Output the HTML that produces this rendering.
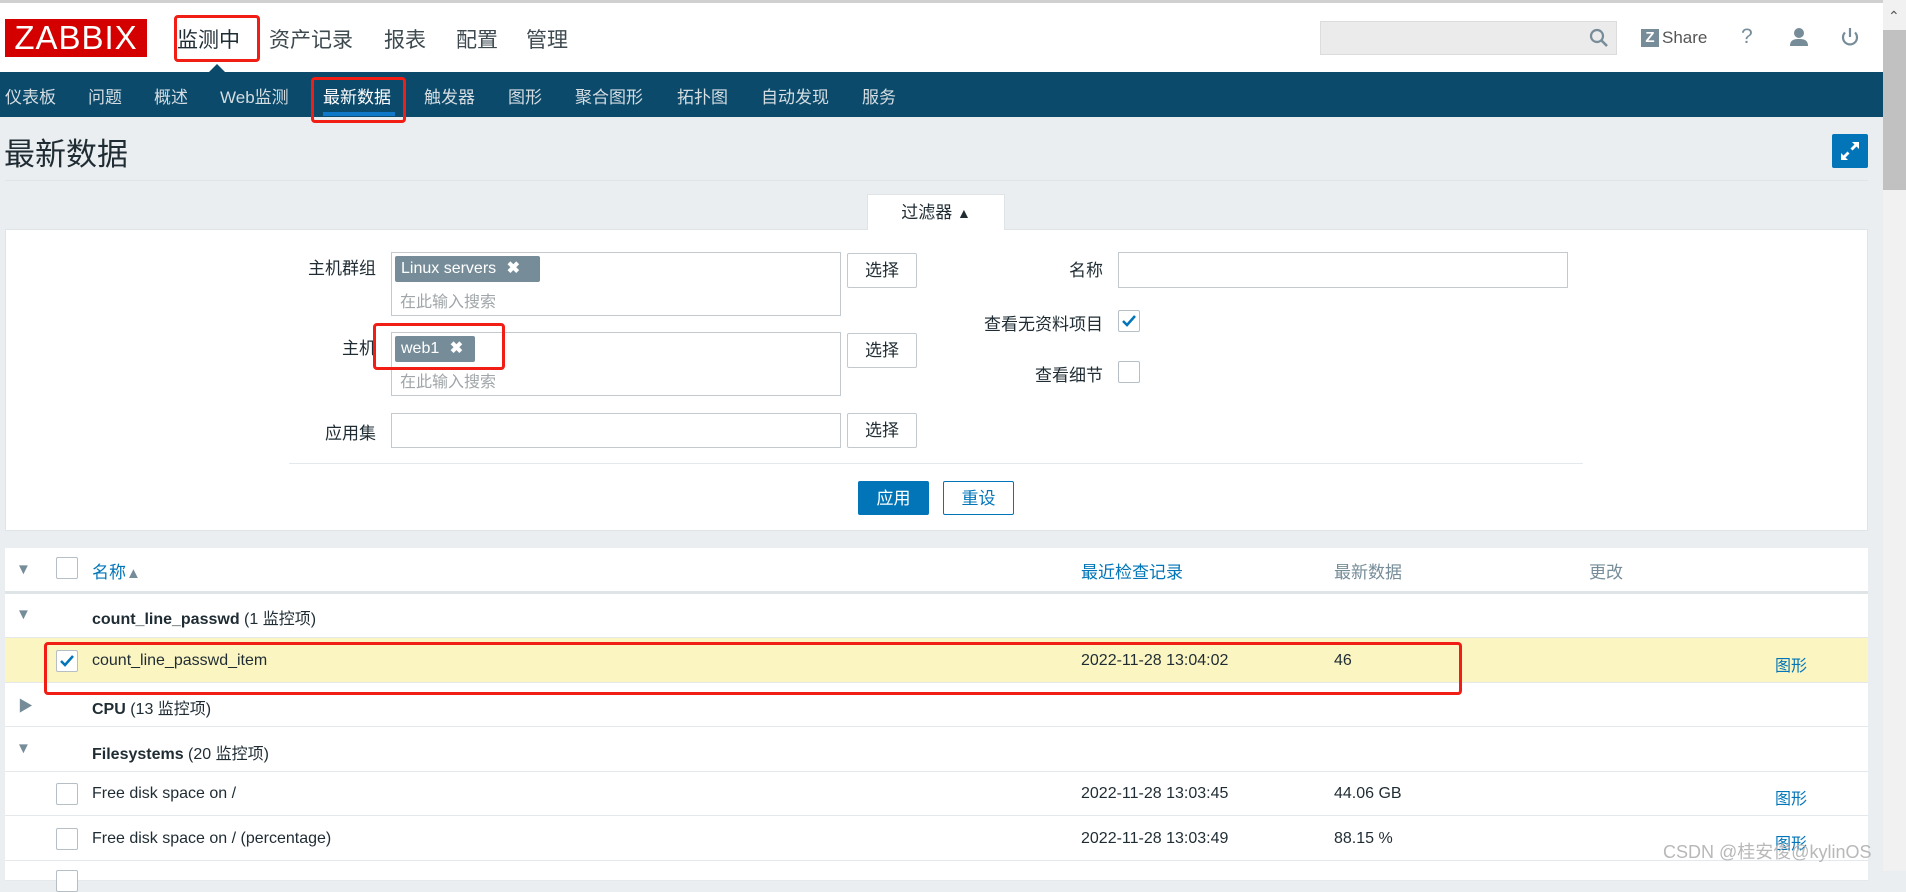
<!DOCTYPE html>
<html><head><meta charset="utf-8"><style>
*{box-sizing:border-box;margin:0;padding:0}
body{width:1906px;height:871px;overflow:hidden;background:#ebeef0;font-family:"Liberation Sans","Noto Sans CJK SC",sans-serif;color:#1f2c33;font-size:16px;position:relative}
.a{position:absolute;white-space:nowrap}
.rb{position:absolute;border:3px solid #f01e14;border-radius:4px;z-index:10}
.inp{position:absolute;background:#fff;border:1px solid #c3c9cc}
.btn{position:absolute;background:#fff;border:1px solid #c3c9cc;border-radius:2px;text-align:center;font-size:17px;line-height:33px}
.tag{position:absolute;background:#768d99;color:#fff;border-radius:2px;font-size:16px;line-height:26px;padding-left:6px}
.cb{position:absolute;width:22px;height:22px;border:1px solid #b5bfc5;border-radius:2px;background:#fff}
.row{position:absolute;left:5px;width:1863px;border-bottom:1px solid #e6e9eb;background:#fff}
.ph{color:#a0a6a9;font-size:16px}
</style></head><body>
<div class="a" style="left:0;top:0;width:1883px;height:3px;background:#d0d0d0"></div>
<div class="a" style="left:0;top:3px;width:1883px;height:69px;background:#fff"></div>
<div class="a" style="left:5px;top:19px;width:142px;height:38px;background:#d40000;color:#fff;font-size:33px;line-height:38px;text-align:center;letter-spacing:1px">ZABBIX</div>
<div class="a" style="left:177px;top:24px;font-size:21px;color:#1f2c33">监测中</div>
<div class="rb" style="left:174px;top:15px;width:86px;height:47px"></div>
<div class="a" style="left:269px;top:24px;font-size:21px;color:#3e4a50">资产记录</div>
<div class="a" style="left:384px;top:24px;font-size:21px;color:#3e4a50">报表</div>
<div class="a" style="left:456px;top:24px;font-size:21px;color:#3e4a50">配置</div>
<div class="a" style="left:526px;top:24px;font-size:21px;color:#3e4a50">管理</div>
<div class="a" style="left:1320px;top:21px;width:297px;height:34px;background:#ebebeb;border:1px solid #dcdcdc"></div>
<svg class="a" style="left:1588px;top:27px" width="22" height="22" viewBox="0 0 22 22"><circle cx="9" cy="9" r="6" fill="none" stroke="#768d99" stroke-width="2.2"/><path d="M13.5 13.5L19 19" stroke="#768d99" stroke-width="2.6"/></svg>
<div class="a" style="left:1641px;top:29px;width:18px;height:18px;background:#768d99;color:#fff;font-weight:bold;font-size:15px;line-height:18px;text-align:center">Z</div>
<div class="a" style="left:1662px;top:28px;font-size:17px;color:#555">Share</div>
<div class="a" style="left:1741px;top:25px;font-size:21px;color:#768d99">?</div>
<svg class="a" style="left:1789px;top:27px" width="20" height="20" viewBox="0 0 20 20"><circle cx="10" cy="6" r="5" fill="#768d99"/><path d="M1 19c0-6 4-7 9-7s9 1 9 7z" fill="#768d99"/></svg>
<svg class="a" style="left:1839px;top:26px" width="22" height="22" viewBox="0 0 22 22"><path d="M6 6.5a7 7 0 1 0 10 0" fill="none" stroke="#768d99" stroke-width="2.2"/><path d="M11 2v9" stroke="#768d99" stroke-width="2.2"/></svg>
<div class="a" style="left:0;top:72px;width:1883px;height:45px;background:#0b4a6b"></div>
<div class="a" style="left:209px;top:64px;width:0;height:0;border-left:8px solid transparent;border-right:8px solid transparent;border-bottom:8px solid #0b4a6b"></div>
<div style="position:absolute;top:83px;left:0;font-size:17px;color:#d4dde2">
<span class="a" style="left:5px">仪表板</span><span class="a" style="left:88px">问题</span><span class="a" style="left:154px">概述</span><span class="a" style="left:220px">Web监测</span><span class="a" style="left:323px;color:#fff">最新数据</span><span class="a" style="left:424px">触发器</span><span class="a" style="left:508px">图形</span><span class="a" style="left:575px">聚合图形</span><span class="a" style="left:677px">拓扑图</span><span class="a" style="left:761px">自动发现</span><span class="a" style="left:862px">服务</span></div>
<div class="a" style="left:323px;top:112px;width:72px;height:4px;background:#0f78c8"></div>
<div class="rb" style="left:311px;top:77px;width:95px;height:46px"></div>
<div class="a" style="left:4px;top:129px;font-size:31px;color:#1f2c33">最新数据</div>
<div class="a" style="left:1832px;top:134px;width:36px;height:34px;background:#0275b8;border-radius:2px"></div>
<svg class="a" style="left:1838px;top:139px" width="24" height="24" viewBox="0 0 24 24"><path d="M14 3h7v7l-2.5-2.5-4 4-2-2 4-4zM10 21H3v-7l2.5 2.5 4-4 2 2-4 4z" fill="#fff"/></svg>
<div class="a" style="left:5px;top:180px;width:1863px;height:1px;background:#dfe4e7"></div>
<div class="a" style="left:1883px;top:0;width:23px;height:871px;background:#f1f1f1"></div>
<div class="a" style="left:1883px;top:30px;width:23px;height:160px;background:#c1c1c1"></div>
<div class="a" style="left:1888px;top:8px;font-size:14px;color:#555">&#8963;</div>
<div class="a" style="left:867px;top:194px;width:138px;height:36px;background:#fff;border:1px solid #dfe4e7;border-bottom:none;text-align:center;line-height:36px;font-size:17px;z-index:2">过滤器 <span style="font-size:14px">▲</span></div>
<div class="a" style="left:5px;top:229px;width:1863px;height:302px;background:#fff;border:1px solid #dfe4e7"></div>
<div class="a" style="right:1530px;top:254px;font-size:17px">主机群组</div>
<div class="inp" style="left:391px;top:252px;width:450px;height:64px"></div>
<div class="tag" style="left:395px;top:256px;width:145px">Linux servers <b style="margin-left:6px">✖</b></div>
<div class="a ph" style="left:400px;top:288px">在此输入搜索</div>
<div class="btn" style="left:847px;top:253px;width:70px;height:35px">选择</div>
<div class="a" style="right:1530px;top:334px;font-size:17px">主机</div>
<div class="inp" style="left:391px;top:332px;width:450px;height:64px"></div>
<div class="tag" style="left:395px;top:336px;width:80px">web1 <b style="margin-left:6px">✖</b></div>
<div class="a ph" style="left:400px;top:368px">在此输入搜索</div>
<div class="rb" style="left:373px;top:323px;width:132px;height:47px"></div>
<div class="btn" style="left:847px;top:333px;width:70px;height:35px">选择</div>
<div class="a" style="right:1530px;top:419px;font-size:17px">应用集</div>
<div class="inp" style="left:391px;top:413px;width:450px;height:35px"></div>
<div class="btn" style="left:847px;top:413px;width:70px;height:35px">选择</div>
<div class="a" style="right:803px;top:256px;font-size:17px">名称</div>
<div class="inp" style="left:1118px;top:252px;width:450px;height:36px"></div>
<div class="a" style="right:803px;top:310px;font-size:17px">查看无资料项目</div>
<div class="cb" style="left:1118px;top:310px"><svg width="20" height="20" viewBox="0 0 20 20"><path d="M4 10l4 4 8-9" fill="none" stroke="#0275b8" stroke-width="2.5"/></svg></div>
<div class="a" style="right:803px;top:361px;font-size:17px">查看细节</div>
<div class="cb" style="left:1118px;top:361px"></div>
<div class="a" style="left:289px;top:463px;width:1294px;height:1px;background:#e6e9eb"></div>
<div class="btn" style="left:858px;top:481px;width:71px;height:34px;background:#0275b8;border-color:#0275b8;color:#fff">应用</div>
<div class="btn" style="left:943px;top:481px;width:71px;height:34px;border-color:#0275b8;color:#0275b8">重设</div>
<div class="row" style="top:548px;height:46px;border-bottom:3px solid #dfe4e7"></div>
<div class="a" style="left:16px;top:561px;font-size:15px;color:#768d99">▼</div>
<div class="cb" style="left:56px;top:557px"></div>
<div class="a" style="left:92px;top:558px;color:#0275b8;font-size:17px">名称<span style="font-size:15px;color:#768d99">▲</span></div>
<div class="a" style="left:1081px;top:558px;color:#0275b8;font-size:17px">最近检查记录</div>
<div class="a" style="left:1334px;top:558px;color:#768d99;font-size:17px">最新数据</div>
<div class="a" style="left:1589px;top:558px;color:#768d99;font-size:17px">更改</div>
<div class="row" style="top:594px;height:44px"></div>
<div class="a" style="left:16px;top:606px;font-size:15px;color:#768d99">▼</div>
<div class="a" style="left:92px;top:605px"><b>count_line_passwd</b> (1 监控项)</div>
<div class="row" style="top:638px;height:45px;background:#fbf5c2"></div>
<div class="cb" style="left:56px;top:650px"><svg width="20" height="20" viewBox="0 0 20 20"><path d="M4 10l4 4 8-9" fill="none" stroke="#0275b8" stroke-width="2.5"/></svg></div>
<div class="a" style="left:92px;top:652px">count_line_passwd_item</div>
<div class="a" style="left:1081px;top:652px">2022-11-28 13:04:02</div>
<div class="a" style="left:1334px;top:652px">46</div>
<div class="a" style="left:1775px;top:652px;color:#0275b8">图形</div>
<div class="row" style="top:683px;height:44px"></div>
<div class="a" style="left:18px;top:695px;font-size:15px;color:#768d99">▶</div>
<div class="a" style="left:92px;top:695px"><b>CPU</b> (13 监控项)</div>
<div class="row" style="top:727px;height:45px"></div>
<div class="a" style="left:16px;top:740px;font-size:15px;color:#768d99">▼</div>
<div class="a" style="left:92px;top:740px"><b>Filesystems</b> (20 监控项)</div>
<div class="row" style="top:772px;height:44px"></div>
<div class="cb" style="left:56px;top:783px"></div>
<div class="a" style="left:92px;top:785px">Free disk space on /</div>
<div class="a" style="left:1081px;top:785px">2022-11-28 13:03:45</div>
<div class="a" style="left:1334px;top:785px">44.06 GB</div>
<div class="a" style="left:1775px;top:785px;color:#0275b8">图形</div>
<div class="row" style="top:816px;height:45px"></div>
<div class="cb" style="left:56px;top:828px"></div>
<div class="a" style="left:92px;top:830px">Free disk space on / (percentage)</div>
<div class="a" style="left:1081px;top:830px">2022-11-28 13:03:49</div>
<div class="a" style="left:1334px;top:830px">88.15 %</div>
<div class="a" style="left:1775px;top:830px;color:#0275b8">图形</div>
<div class="row" style="top:861px;height:20px"></div>
<div class="cb" style="left:56px;top:870px"></div>
<div class="rb" style="left:44px;top:642px;width:1418px;height:53px"></div>
<div class="a" style="left:1663px;top:838px;font-size:18px;color:#b8b8b8;z-index:11">CSDN @桂安俊@kylinOS</div>
</body></html>
